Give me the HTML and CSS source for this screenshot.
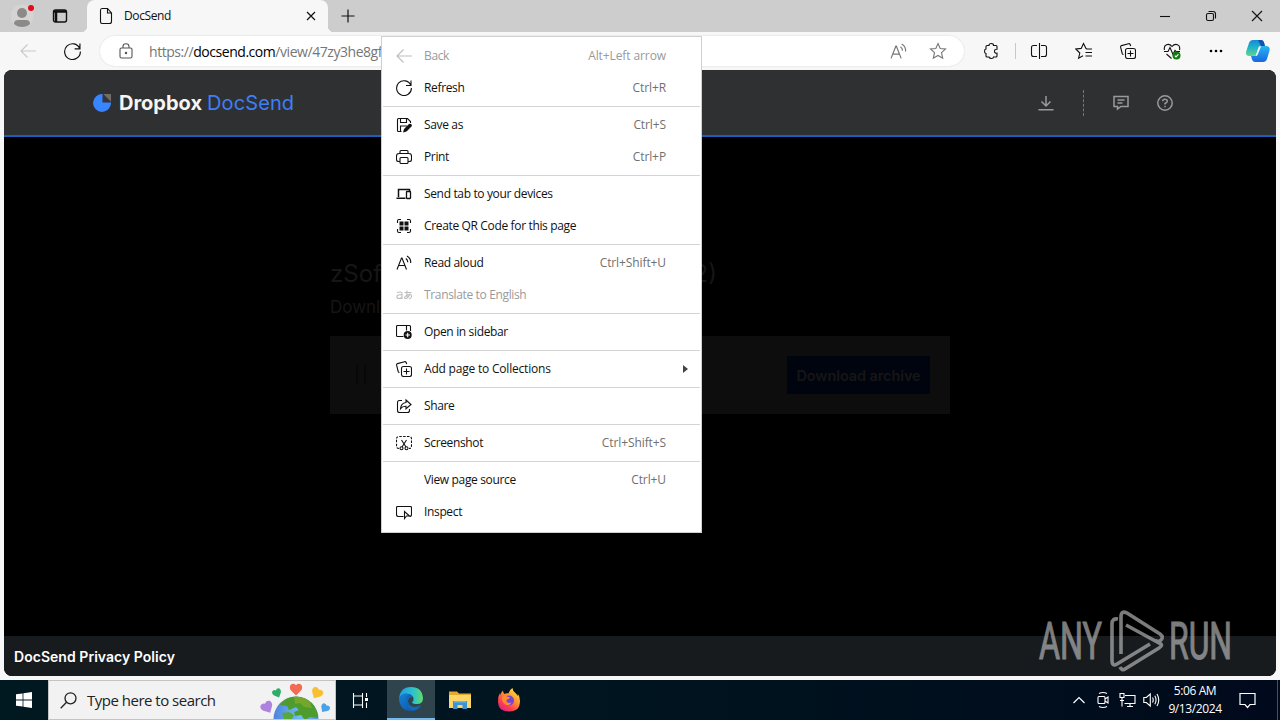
FILE: index.html
```
<!DOCTYPE html>
<html lang="en">
<head>
    <meta charset="utf-8">
    <title>DocSend</title>
    <link rel="stylesheet" href="styles.css">
</head>
<body>
<!-- shared icons -->
<svg class="defs">
    <symbol id="back" viewBox="0 0 16 16"><path d="M16 8H1M7.500 1.500L1 8l6.500 6.500"/></symbol>
    <symbol id="refresh" viewBox="0 0 16 16"><path d="M14.800 5.200A7.400 7.400 0 1 0 15.400 8M15 .5v5h-5"/></symbol>
    <symbol id="aloud" viewBox="0 0 16 16"><path d="M1 14.500L5.500 3h.5l4.500 11.500M2.600 10.500h6.400M9.800 3.500q2 1.300 2 3.800M11 1q4 2.300 3.700 7"/></symbol>
    <symbol id="collections" viewBox="0 0 16 16"><path d="M3.500 11.500Q2.500 11.500 2.200 10.500L.6 4.200Q.4 3 1.500 2.600L8.500.7Q9.700.5 10.200 1.500L10.700 3.200"/><rect x="5.500" y="5.500" width="10" height="10" rx="2"/><path d="M10.500 7.500v6M7.500 10.500h6"/></symbol>
</svg>

<div class="browser">
    <div class="tabbar">
        <div class="profile">
            <svg width="24" height="24" viewBox="0 0 24 24"><circle cx="12" cy="12" r="11.500" fill="#d6d4d2"/><circle cx="12" cy="9" r="5" fill="#8c8a88"/><path d="M4 20q0-4 4-4h8q4 0 4 4-3 3-8 3t-8-3z" fill="#8c8a88"/></svg>
            <span class="badge"></span>
        </div>
        <svg class="line tab-actions" width="16" height="16" viewBox="0 0 16 16"><rect x="1.500" y="2" width="13" height="12" rx="2" stroke-width="1.400"/><path d="M2 3.500h12M4 3v11" stroke-width="2.500"/></svg>
        <div class="tab">
            <svg class="line" width="14" height="18" viewBox="0 0 14 18"><path d="M3 1.500h5.500l4 4.500v8.500q0 2-2 2H3q-1.500 0-1.500-2v-11q0-2 1.500-2zM8.500 1.500V6h4"/></svg>
            <span class="tab-title">DocSend</span>
            <svg class="line" width="10" height="10" viewBox="0 0 10 10"><path d="M1 1l8 8M9 1l-8 8" stroke-width="1.200"/></svg>
        </div>
        <svg class="line new-tab" width="14" height="14" viewBox="0 0 14 14"><path d="M7 .5v13M.5 7h13" stroke-width="1.200"/></svg>
        <div class="window-controls">
            <div><svg class="line" width="12" height="12" viewBox="0 0 12 12"><path d="M1 6.500h10"/></svg></div>
            <div><svg class="line" width="12" height="12" viewBox="0 0 12 12"><rect x="1.500" y="3.500" width="7" height="7" rx="1.500"/><path d="M3.500 1.500h4.500q2.500 0 2.500 2.500v4.500"/></svg></div>
            <div><svg class="line" width="12" height="12" viewBox="0 0 12 12"><path d="M1 1l10 10M11 1L1 11"/></svg></div>
        </div>
    </div>

    <div class="toolbar">
        <div class="tool disabled"><svg class="line" width="16" height="16"><use href="#back"/></svg></div>
        <div class="tool"><svg class="line" width="17" height="17"><use href="#refresh"/></svg></div>
        <div class="address">
            <svg class="line lock" width="14" height="16" viewBox="0 0 14 16"><rect x="1" y="5" width="12" height="10" rx="1.500"/><path d="M4 5V3.500Q4 .7 7 .7t3 2.800V5"/><circle cx="7" cy="10" r=".7" fill="currentColor"/></svg>
            <span class="url">https://<b>docsend.com</b>/view/47zy3he8gf</span>
            <svg class="line" width="17" height="17"><use href="#aloud"/></svg>
            <svg class="line star" width="18" height="18" viewBox="0 0 18 18"><path d="M9 1.500l2.200 5 5.300.5-4 3.700 1.200 5.500L9 13.500l-4.700 2.700 1.200-5.500L1.500 7l5.300-.5z"/></svg>
        </div>
        <div class="tool ext"><svg class="line" width="18" height="18" viewBox="0 0 18 18"><path d="M6 3.500Q6 1.500 8.300 1.500T10.500 3.500H13q1 0 1 1v2.700q-2.500-.2-2.500 2t2.500 2V14q0 1-1 1h-2.500q0 1.500-2 1.500T6 15H4q-1 0-1-1v-2.500q-1.500-.3-1.500-2.300T3 7V4.500q0-1 1-1z"/></svg></div>
        <span class="divider"></span>
        <div class="tool"><svg class="line" width="18" height="18" viewBox="0 0 18 18"><path d="M7 3.500H3.500q-2 0-2 2v7q0 2 2 2H7M11 3.500h3.500q2 0 2 2v7q0 2-2 2H11M9.500 1v16"/></svg></div>
        <div class="tool fav"><svg class="line" width="18" height="18" viewBox="0 0 18 18"><path d="M12 6.800l-1-.2L8.500 1.500 6.200 6.400.8 7l4 4-1.200 5.200L8 13.700M11 7h6M10.500 10.500H17M10.500 14H17"/></svg></div>
        <div class="tool"><svg class="line" width="16" height="16"><use href="#collections"/></svg></div>
        <div class="tool"><svg class="line" width="18" height="18" viewBox="0 0 18 18"><path d="M1.500 8Q.5 4 3.500 2.700T9 4.500q2.500-3 5.500-1.800T16.500 8M1 9.500h4l2-4 3 7 2-4 1 1h4M3.500 12l5 4.500"/><circle cx="13.500" cy="13.500" r="4" fill="#107c10" stroke="none"/><path d="M11.800 13.700l1.200 1.200 2.400-2.500" stroke="#fff"/></svg></div>
        <div class="tool"><svg width="16" height="4" viewBox="0 0 16 4"><circle cx="3" cy="2" r="1.300"/><circle cx="8" cy="2" r="1.300"/><circle cx="13" cy="2" r="1.300"/></svg></div>
        <div class="tool copilot">
            <svg width="24" height="22" viewBox="0 0 24 22">
                <defs>
                    <linearGradient id="cp1" x1="0" y1="0" x2="0" y2="1"><stop offset="0" stop-color="#1389d8"/><stop offset=".5" stop-color="#22b6c5"/><stop offset="1" stop-color="#63d58b"/></linearGradient>
                    <linearGradient id="cp2" x1="0" y1="0" x2="0" y2="1"><stop offset="0" stop-color="#27b5f2"/><stop offset="1" stop-color="#1768e0"/></linearGradient>
                </defs>
                <path d="M7 0h8q2 0 2.800 2L19 6h-4q-2 0-2.700 2.200L10.500 14Q9.700 16 7.500 16H3Q-1 16 .3 11L3 3Q4 0 7 0z" fill="url(#cp1)"/>
                <path d="M12 0h3q2 0 2.800 2L19 6h-4z" fill="#174fb4"/>
                <path d="M17 22H9q-2 0-2.800-2L5 16h3q2 0 2.700-2.200L12.500 8q.8-2 3-2H20q4 0 3.700 4L21 19q-1 3-4 3z" fill="url(#cp2)"/>
                <path d="M13 6.500h2L11.500 15q-.5 1-2 1z" fill="#f2faff"/>
            </svg>
        </div>
    </div>

    <div class="page">
        <div class="page-header">
            <div class="brand">
                <svg width="18" height="18" viewBox="0 0 18 18"><path d="M9.500 0v8.500H18A9 9 0 1 1 9.500 0z" fill="#3984ff"/><path d="M10 0h8v8z" fill="#736b66"/><path d="M10 0v8h8z" fill="#36353a"/></svg>
                <span class="brand-dropbox">Dropbox</span>
                <span class="brand-docsend">DocSend</span>
            </div>
            <div class="header-actions">
                <svg class="line" width="16" height="16" viewBox="0 0 16 16"><path d="M8 1v9.500M3.500 6.500L8 11l4.500-4.500M.5 14.800h15" stroke-width="1.500"/></svg>
                <span class="dashes"></span>
                <svg class="line" width="16" height="16" viewBox="0 0 16 16"><path d="M1 1.500h14v10H8L4.500 14v-2.500H1zM4.500 5h7M4.500 8h5" stroke-width="1.500"/></svg>
                <svg class="line" width="16" height="16" viewBox="0 0 16 16"><circle cx="8" cy="8" r="7.200" stroke-width="1.500"/><path d="M5.700 6.200Q5.700 4.200 8 4.200t2.300 2Q10.300 7.200 8 8.500v1M8 10.800v1.500" stroke-width="1.500"/></svg>
            </div>
        </div>
        <div class="content">
            <div class="title"><span>zSoft</span><span>(2)</span></div>
            <div class="subtitle">Download</div>
            <div class="file-row">
                <span class="file-icon"></span>
                <span class="download">Download archive</span>
            </div>
        </div>
        <div class="page-footer">DocSend Privacy Policy</div>
    </div>
</div>

<div class="taskbar">
    <div class="start"><svg width="16" height="16" viewBox="0 0 16 16" fill="#fff"><path d="M0 2.300L6.600 1.400v6.200H0zM7.400 1.300L16 0v7.600H7.400zM0 8.400h6.600v6.200L0 13.700zM7.400 8.400H16V16l-8.600-1.300z"/></svg></div>
    <div class="search">
        <svg class="line" width="17" height="17" viewBox="0 0 17 17"><circle cx="10.500" cy="6.300" r="5.500" stroke-width="1.300"/><path d="M6.500 10.200L.7 16.200" stroke-width="1.300"/></svg>
        <span>Type here to search</span>
        <svg class="globe" width="70" height="38" viewBox="0 0 70 38">
            <defs>
                <path id="heart" d="M0 6.500L-5 1.500Q-7-1-5.500-4-2.500-6.500 0-3.800 2.500-6.500 5.500-4 7-1 5 1.500z"/>
                <radialGradient id="sea" cx=".6" cy=".4" r=".7"><stop offset="0" stop-color="#73c2f4"/><stop offset="1" stop-color="#4878d8"/></radialGradient>
                <clipPath id="ball"><circle cx="36" cy="38" r="22.500"/></clipPath>
            </defs>
            <circle cx="36" cy="38" r="22.500" fill="url(#sea)"/>
            <g clip-path="url(#ball)">
                <path d="M20 24q5-8 14-9 13-1 20 9 5 8 4 13l-8-1-5 3-4-5-6 1-1-4 5-2-3-3-7 3-2-4z" fill="#4d9c2d"/>
                <path d="M34 16q9-1 16 5l2 6-8-1-4-4-5 1z" fill="#75a72c"/>
                <path d="M22 32l7-1 5 3-2 4h-8z" fill="#58a83c"/>
            </g>
            <use href="#heart" x="36" y="8" fill="#f36b52"/>
            <use href="#heart" transform="translate(17 12) rotate(-25) scale(.75)" fill="#2fac68"/>
            <use href="#heart" transform="translate(57 12) rotate(30) scale(.95)" fill="#f8bf32"/>
            <use href="#heart" transform="translate(7 26) rotate(-30)" fill="#ad83df"/>
            <use href="#heart" transform="translate(65 27) rotate(35) scale(.75)" fill="#4aa2e8"/>
        </svg>
    </div>
    <div class="app"><svg class="line" width="17" height="17" viewBox="0 0 17 17"><path d="M1.500 1v3h9V1M1.500 16v-3h9v3M1.500 4v9M10.500 4v9M14.500 1v4M14.500 10.500V16"/><rect x="13" y="6" width="3" height="3" fill="#fff" stroke="none"/></svg></div>
    <div class="app active">
        <svg width="24" height="24" viewBox="0 0 24 24">
            <defs>
                <linearGradient id="ed1" x1="0" y1="0" x2="1" y2="0"><stop offset="0" stop-color="#269be1"/><stop offset=".6" stop-color="#2cc3cb"/><stop offset="1" stop-color="#62dc68"/></linearGradient>
                <linearGradient id="ed2" x1="0" y1="0" x2="1" y2="1"><stop offset="0" stop-color="#1483d6"/><stop offset="1" stop-color="#0b4fa5"/></linearGradient>
            </defs>
            <path d="M0 12Q1 0 12 0t12 11q0 6-6 6-5 0-5-2 2-1 1.500-4Q13 7 8 7 2 7 0 12z" fill="url(#ed1)"/>
            <path d="M0 12Q2 6 8 6.500q4.500.5 5.500 3.500-5 0-4.500 5 1 5 7 5 3 0 6-2-3 6-10 6Q1 24 0 12z" fill="url(#ed2)"/>
            <path d="M7 12q0-4 4.500-4.500 2 1 2 2.500-5 0-4.500 5 1 5 7 5 3 0 6-2-2.500 5-8 5.700Q7 21 7 12z" fill="#1668b5"/>
        </svg>
    </div>
    <div class="app">
        <svg width="22" height="20" viewBox="0 0 22 20"><path d="M0 1.500h8l2 2h12V18H0z" fill="#e9a92c"/><path d="M0 5h22v13H0z" fill="#fbd668"/><path d="M4 19v-8h14v8h-4.500v-4h-5v4z" fill="#3f91cf"/><path d="M5 11h12v1.500H5z" fill="#69b8ec"/></svg>
    </div>
    <div class="app">
        <svg width="24" height="24" viewBox="0 0 24 24">
            <defs><linearGradient id="ff" x1=".9" y1="0" x2=".2" y2="1"><stop offset="0" stop-color="#fff04a"/><stop offset=".4" stop-color="#ff9b2e"/><stop offset=".75" stop-color="#fb3c52"/><stop offset="1" stop-color="#e01e8a"/></linearGradient></defs>
            <path d="M1 13Q1 8 3 5l.5 2.500Q4 4 6 2.500q0 2 1.500 3.500 2-1 4-.5 1-4 4-5.500 0 3 3 5 1.500 1.500 2 3l.5-2q2 3 2 7Q23 23.500 12 23.500T1 13z" fill="url(#ff)"/>
            <circle cx="12" cy="12.500" r="5" fill="#7444d5"/>
            <path d="M5 9q3-2 5-.5 2 .5 3 .7-.5 2-3 2.300-1 1.500 0 2.500 2 1.500 4.500.5-2 4-6.500 2Q5 14.500 5 9z" fill="#ff8a2f"/>
        </svg>
    </div>
    <div class="tray">
        <div><svg class="line" width="14" height="14" viewBox="0 0 14 14"><path d="M1.500 10L7 4.500l5.500 5.500" stroke-width="1.200"/></svg></div>
        <div><svg class="line" width="14" height="18" viewBox="0 0 14 18"><rect x="2" y="5.500" width="7" height="7" rx="1"/><path d="M9 8l3-2v6L9 10M3 2.500Q7 .5 11 2.500M3 15.500q4 2 8 0"/></svg></div>
        <div><svg class="line" width="17" height="16" viewBox="0 0 17 16"><path d="M6 3.500h10v8H5.500M8 14.500h6M11 11.500v3M1 1.500h4v4H1zM3 5.500v9M1 8.500h4"/></svg></div>
        <div><svg class="line" width="17" height="16" viewBox="0 0 17 16"><path d="M.8 5.500h2.500l4-3.500v12l-4-3.500H.8zM9.500 5.500q1.500 2.500 0 5M11.800 3.800q2.500 4.200 0 8.400M14 2q3.500 6 0 12"/></svg></div>
        <div class="clock"><span>5:06 AM</span><span>9/13/2024</span></div>
        <div class="notify"><svg class="line" width="17" height="17" viewBox="0 0 17 17"><path d="M1 1.500h15v11h-5L8.500 15.500 6 12.500H1z" stroke-width="1.200"/></svg></div>
    </div>
</div>

<div class="menu">
    <div class="item disabled"><svg class="line" width="16" height="16"><use href="#back"/></svg><span>Back</span><kbd>Alt+Left arrow</kbd></div>
    <div class="item"><svg class="line" width="16" height="16"><use href="#refresh"/></svg><span>Refresh</span><kbd>Ctrl+R</kbd></div>
    <hr>
    <div class="item"><svg class="line" width="16" height="16" viewBox="0 0 16 16"><path d="M5.500 14.500h-3q-1 0-1-1v-11q0-1 1-1h9l3 3V6M4.500 1.500v4h6v-4M4.500 14.500V9H11"/><path d="M7 15.500l1-3.500 5-5q1.300-.8 2.300.3t.2 2.200l-5 5z" fill="#111" stroke="none"/></svg><span>Save as</span><kbd>Ctrl+S</kbd></div>
    <div class="item"><svg class="line" width="16" height="16" viewBox="0 0 16 16"><path d="M4 4.500v-2q0-1 1-1h6q1 0 1 1v2M4 12.500H2.500q-2 0-2-2V7Q.5 4.500 3 4.500h10q2.500 0 2.500 2.500v3.500q0 2-2 2H12"/><rect x="4" y="8.500" width="8" height="6" rx="1"/></svg><span>Print</span><kbd>Ctrl+P</kbd></div>
    <hr>
    <div class="item"><svg class="line" width="16" height="16" viewBox="0 0 16 16"><path d="M2.500 11V3.500h11V5M.5 12.300h9" stroke-width="1.500"/><rect x="10.500" y="5.500" width="4" height="7" rx=".5" stroke-width="1.300"/></svg><span>Send tab to your devices</span></div>
    <div class="item"><svg class="line" width="16" height="16" viewBox="0 0 16 16"><path d="M1.500 5V3q0-1.500 1.500-1.500h2M11 1.500h2q1.500 0 1.500 1.500v2M14.500 11v2q0 1.500-1.500 1.500h-2M5 14.500H3Q1.500 14.500 1.500 13v-2"/><path d="M3.500 3.500h4v4h-4zM8.500 3.500h4v4h-4zM3.500 8.500h4v4h-4zM8.500 8.500h4v4h-4z" fill="#111" stroke="none"/></svg><span>Create QR Code for this page</span></div>
    <hr>
    <div class="item"><svg class="line" width="16" height="16"><use href="#aloud"/></svg><span>Read aloud</span><kbd>Ctrl+Shift+U</kbd></div>
    <div class="item disabled"><svg class="line" width="16" height="16" viewBox="0 0 16 16"><path d="M1 5.500q5-1.500 5 1V12M6 7.500Q.8 7.500.8 9.500T3 11.500q3 0 3-2M8.500 5.500h7M11 3.500q-.5 4 .5 8M14 6.500Q12 12 9.500 11.500T11 8q4.500-1.500 4.500 1T13 12"/></svg><span>Translate to English</span></div>
    <hr>
    <div class="item"><svg class="line" width="16" height="16" viewBox="0 0 16 16"><path d="M7.500 12.500h-6q-1 0-1-1v-9q0-1 1-1h12q1 0 1 1V7M10.500 1.500v5"/><circle cx="11.700" cy="11" r="4" fill="#111" stroke="none"/><path d="M9.500 11h4.400M11.700 8.800v4.400" stroke="#fff"/></svg><span>Open in sidebar</span></div>
    <hr>
    <div class="item"><svg class="line" width="16" height="16"><use href="#collections"/></svg><span class="wide">Add page to Collections</span><i class="arrow"></i></div>
    <hr>
    <div class="item"><svg class="line" width="16" height="16" viewBox="0 0 16 16"><path d="M6 2.500H3.500q-2 0-2 2v8q0 2 2 2h8q2 0 2-2V11M10 2l5 4.500-5 4.200V8.300Q6.500 8 4.500 10.800 5 5 10 4.500z"/></svg><span>Share</span></div>
    <hr>
    <div class="item"><svg class="line" width="16" height="16" viewBox="0 0 16 16"><path d="M3 13.500Q.5 13.500.5 11V4Q.5 1.500 3 1.500h10q2.500 0 2.500 2.500v7q0 2.500-2.500 2.500" stroke-dasharray="2.500 1.300"/><path d="M5.500 5L10 12M10.500 5L6 12"/><circle cx="5.500" cy="13.300" r="1.500"/><circle cx="10.500" cy="13.300" r="1.500"/></svg><span>Screenshot</span><kbd>Ctrl+Shift+S</kbd></div>
    <hr>
    <div class="item"><svg width="16" height="16"></svg><span>View page source</span><kbd>Ctrl+U</kbd></div>
    <div class="item"><svg class="line" width="16" height="16" viewBox="0 0 16 16"><path d="M7.500 12.500h-5q-2 0-2-2v-7q0-1 1-1h13q1 0 1 1v7q0 2-2 2"/><path d="M8.500 7.500v7l2-2.500h3z" fill="#fff"/></svg><span>Inspect</span></div>
</div>

<svg class="watermark" width="240" height="70" viewBox="0 0 240 70">
    <text x="1" y="50" textLength="63" lengthAdjust="spacingAndGlyphs">ANY</text>
    <text x="131" y="50" textLength="63" lengthAdjust="spacingAndGlyphs">RUN</text>
    <g fill="none" stroke-width="3.600" stroke-linejoin="round">
        <path d="M80 10q-6-1-6 5v36q0 7 5 4l33-20"/>
        <path d="M83 45V8q0-7 6-4l33 21q4 3 1 6t-6 0"/>
        <path d="M88 16l33 18q5 2 0 5L87 60q-3 2-5-2"/>
    </g>
</svg>
</body>
</html>
```

FILE: styles.css
```
* {
    box-sizing: border-box;
}

html, body {
    margin: 0;
    padding: 0;
    width: 1280px;
    height: 720px;
    overflow: hidden;
    font-family: "Open Sans", "Noto Sans", sans-serif;
    font-size: 12px;
    color: #111;
}

body {
    display: flex;
    flex-direction: column;
}

svg {
    display: block;
    flex-shrink: 0;
}

.defs {
    position: absolute;
    width: 0;
    height: 0;
}

.line {
    fill: none;
    stroke: currentColor;
    stroke-width: 1.1;
}

/* browser window */
.browser {
    display: flex;
    flex-direction: column;
    height: 680px;
    background: #f7f7f7;
}

.tabbar {
    display: flex;
    align-items: center;
    height: 32px;
    background: #cdcdcd;
}

.profile {
    position: relative;
    margin-left: 10px;
}

.badge {
    position: absolute;
    top: 1px;
    right: 0;
    width: 6px;
    height: 6px;
    border-radius: 50%;
    background: #e30b17;
}

.tab-actions {
    margin: 0 19px 0 18px;
}

.tab {
    position: relative;
    display: flex;
    align-items: center;
    width: 241px;
    height: 32px;
    padding: 0 12px;
    background: #f7f7f7;
    border-radius: 8px 8px 0 0;
}

.tab::before,
.tab::after {
    content: "";
    position: absolute;
    bottom: 0;
    width: 6px;
    height: 6px;
}

.tab::before {
    left: -6px;
    background: radial-gradient(circle at 0 0, transparent 6px, #f7f7f7 6.5px);
}

.tab::after {
    right: -6px;
    background: radial-gradient(circle at 100% 0, transparent 6px, #f7f7f7 6.5px);
}

.tab-title {
    flex: 1;
    margin-left: 11px;
    padding-bottom: 1px;
    letter-spacing: -0.4px;
}

.new-tab {
    margin-left: 13px;
}

.window-controls {
    display: flex;
    margin-left: auto;
}

.window-controls div {
    display: flex;
    justify-content: center;
    width: 46px;
}

.toolbar {
    display: flex;
    align-items: center;
    height: 38px;
    padding-left: 6px;
}

.tool {
    display: flex;
    justify-content: center;
    width: 44px;
}

.tool.disabled {
    color: #c9c9c9;
}

.tool.ext {
    padding-left: 2px;
}

.address {
    display: flex;
    align-items: center;
    width: 864px;
    height: 30px;
    margin: 0 5px 0 6px;
    padding: 0 17px 0 19px;
    border-radius: 15px;
    background: #fff;
    box-shadow: 0 0 2px rgba(0, 0, 0, 0.15);
    color: #767676;
}

.lock {
    color: #555;
}

.url {
    flex: 1;
    margin-left: 16px;
    font-size: 14px;
    letter-spacing: -0.45px;
}

.url b {
    font-weight: normal;
    color: #000;
}

.star {
    margin-left: 22px;
}

.divider {
    width: 1px;
    height: 16px;
    margin: 0 1px 0 2px;
    background: #c8c8c8;
}

.fav {
    margin-left: 1px;
}

.copilot {
    width: 40px;
}

/* docsend page */
.page {
    display: flex;
    flex-direction: column;
    height: 606px;
    margin: 0 4px;
    border-radius: 8px;
    overflow: hidden;
    background: #000;
}

.page-header {
    display: flex;
    align-items: center;
    justify-content: space-between;
    height: 67px;
    padding: 0 103px 0 89px;
    background: #2e3032;
    border-bottom: 2px solid #1d5dbd;
}

.brand {
    display: flex;
    align-items: center;
    font-family: Inter, sans-serif;
    font-size: 20px;
}

.brand-dropbox {
    margin-left: 8px;
    font-weight: bold;
    color: #f7f5f2;
}

.brand-docsend {
    margin-left: 5px;
    letter-spacing: 0.1px;
    color: #3f7ff5;
}

.header-actions {
    display: flex;
    align-items: center;
    padding-top: 1px;
    color: #9a9a9a;
}

.dashes {
    height: 26px;
    margin: 0 29px;
    border-left: 1px dashed #777;
}

.header-actions svg:last-child {
    margin-left: 28px;
}

.content {
    flex: 1;
    width: 620px;
    margin: 0 auto;
    padding-top: 120px;
    font-family: Inter, sans-serif;
    color: #161616;
}

.title {
    display: flex;
    justify-content: space-between;
    width: 387px;
    font-size: 24px;
    line-height: 34px;
}

.subtitle {
    margin-top: 5px;
    font-size: 17px;
    line-height: 22px;
}

.file-row {
    display: flex;
    align-items: center;
    justify-content: space-between;
    height: 78px;
    margin-top: 18px;
    padding: 0 20px 0 26px;
    background: #0d0d0d;
}

.file-icon {
    width: 10px;
    height: 20px;
    border: solid #080808;
    border-width: 0 2px;
}

.download {
    width: 143px;
    height: 38px;
    font-size: 14.5px;
    font-weight: 600;
    line-height: 39px;
    text-align: center;
    white-space: nowrap;
    letter-spacing: -0.1px;
    background: #00040e;
}

.page-footer {
    height: 40px;
    padding-left: 10px;
    font-family: Inter, sans-serif;
    font-size: 14px;
    font-weight: 600;
    line-height: 42px;
    letter-spacing: 0.04px;
    color: #fff;
    background: #181b1d;
}

/* taskbar */
.taskbar {
    display: flex;
    height: 40px;
    background: linear-gradient(90deg, #001820, #00141f 50%, #000a1c);
    color: #fff;
}

.start,
.app {
    display: flex;
    align-items: center;
    justify-content: center;
    width: 48px;
}

.search {
    display: flex;
    align-items: center;
    width: 288px;
    padding: 0 5px 0 11px;
    border: 1px solid #c4c4c4;
    background: #f2f2f2;
    color: #222;
}

.search span {
    flex: 1;
    margin-left: 10px;
    font-size: 15px;
    letter-spacing: -0.5px;
}

.app {
    margin-right: 1px;
}

.search + .app {
    margin-right: 3px;
}

.app.active {
    background: #30444e;
    border-bottom: 2px solid #76b9ed;
}

.tray {
    display: flex;
    align-items: center;
    margin-left: auto;
    margin-right: 2px;
    border-right: 1px solid #43506a;
}

.tray div {
    display: flex;
    justify-content: center;
    width: 24px;
}

.tray .clock {
    flex-direction: column;
    align-items: center;
    width: 64px;
    line-height: 18px;
    letter-spacing: -0.4px;
}

.tray .notify {
    width: 50px;
    padding-right: 10px;
}

/* context menu */
.menu {
    position: absolute;
    left: 381px;
    top: 36px;
    width: 321px;
    height: 497px;
    padding: 3px 1px 4px;
    border: 1px solid #cfcfcf;
    background: #fff;
}

.item {
    display: flex;
    align-items: center;
    height: 32px;
    padding: 0 34px 0 13px;
}

.item span {
    flex: 1;
    margin-left: 12px;
    padding-bottom: 1px;
    letter-spacing: -0.35px;
    white-space: nowrap;
}

.item .wide {
    letter-spacing: -0.2px;
}

.item kbd {
    padding-bottom: 1px;
    font-family: inherit;
    letter-spacing: -0.1px;
    color: #707070;
}

.item.disabled,
.item.disabled kbd {
    color: #9a9a9a;
}

.item.disabled svg {
    color: #bdbdbd;
}

.menu hr {
    height: 1px;
    margin: 2px 0;
    border: none;
    background: #d4d4d4;
}

.arrow {
    margin-right: -22px;
    border: 4px solid transparent;
    border-left: 5px solid #444;
    border-right: none;
}

.watermark {
    position: absolute;
    left: 1038px;
    top: 609px;
    opacity: 0.65;
    fill: #bdbdbd;
    stroke: #bdbdbd;
    font-family: Roboto, sans-serif;
    font-size: 52px;
}

.watermark text {
    stroke-width: 1.2;
}
```
